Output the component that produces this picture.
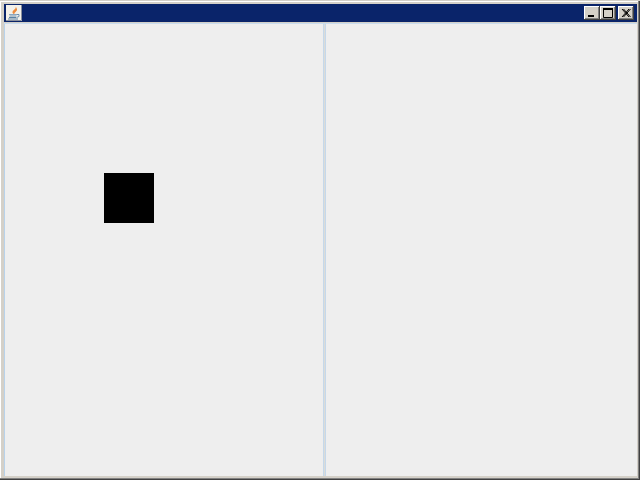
<script>
  // Swing frame with two split panes; the square belongs to the left one
</script>

<div class="frame">
  <div class="titlebar">
    <svg class="app-icon" viewBox="0 0 16 16" aria-hidden="true">
      <rect x="0" y="0" width="16" height="16" fill="#f4f1ea" />
      <path d="M0 15.5H15.5V0" fill="none" stroke="#8a8f9c" />
      <path d="M9.5 1.5 C11 4 6 5 6.5 7.5 C6.8 8.6 7.6 9 8.5 9 C7.6 7.4 11.5 6.5 11 4.2 C10.8 3.2 10.2 2.2 9.5 1.5Z" fill="#ee8a3c" />
      <path d="M3 9.5H11" stroke="#8aa6c0" />
      <path d="M3.5 11H10.5M11 9.5H13V11.5L10.5 12.5" stroke="#6d8fae" fill="none" />
      <path d="M3 12.5H10M2 14H12" stroke="#5a80a3" />
    </svg>
    <div class="controls">
      <button class="ctl" aria-label="Minimize">
        <svg viewBox="0 0 16 14"><rect x="4" y="9" width="6" height="2" fill="#000" /></svg>
      </button>
      <button class="ctl" aria-label="Maximize">
        <svg viewBox="0 0 16 14"><path d="M3.5 2.5H12.5V11.5H3.5Z" fill="none" stroke="#000" /><rect x="3" y="2" width="10" height="2" fill="#000" /></svg>
      </button>
      <button class="ctl close" aria-label="Close">
        <svg viewBox="0 0 16 14"><path d="M4 3L11 11M5.5 3L12.5 11M11 3L4 11M12.5 3L5.5 11" stroke="#000" fill="none" /></svg>
      </button>
    </div>
  </div>
  <div class="split">
    <div class="pane left"><div class="square"></div></div>
    <div class="divider"></div>
    <div class="pane right"></div>
  </div>
</div>

<style>
  :global(body) {
    margin: 0;
    background: #d4d0c8;
  }
  .frame {
    box-sizing: border-box;
    width: 640px;
    height: 480px;
    display: flex;
    flex-direction: column;
    background: #d4d0c8;
    padding: 3px 3px 3px 4px;
    border-top: 1px solid #d4d0c8;
    box-shadow: inset -1px -1px 0 #404040, inset -2px -2px 0 #808080, inset 1px 1px 0 #ffffff;
  }
  .titlebar {
    height: 18px;
    flex: none;
    background: #0a246a;
    display: flex;
    align-items: center;
    justify-content: space-between;
    padding: 0 3px 0 2px;
  }
  .app-icon {
    width: 16px;
    height: 16px;
    display: block;
  }
  .controls {
    display: flex;
    align-items: center;
  }
  .ctl {
    box-sizing: border-box;
    width: 16px;
    height: 14px;
    padding: 0;
    border: 0;
    background: #d4d0c8;
    box-shadow: inset -1px -1px 0 #404040, inset 1px 1px 0 #ffffff, inset -2px -2px 0 #808080;
  }
  .ctl svg {
    display: block;
    width: 16px;
    height: 14px;
  }
  .close {
    margin-left: 2px;
  }
  .split {
    flex: 1;
    display: flex;
    margin-top: 1px;
    margin-bottom: 1px;
    border-top: 1px solid #c8dcee;
    min-height: 0;
  }
  .pane {
    background: #eeeeee;
    min-width: 0;
  }
  .left {
    width: 319px;
    box-sizing: border-box;
    border-left: 1px solid #b8d2ea;
    padding: 149px 0 0 99px;
  }
  .right {
    flex: 1;
  }
  .divider {
    box-sizing: border-box;
    width: 3px;
    background: #dcdcd8;
    border-left: 1px solid #c5d8ea;
    border-right: 1px solid #c5d8ea;
  }
  .square {
    width: 50px;
    height: 50px;
    background: #000;
  }
</style>
